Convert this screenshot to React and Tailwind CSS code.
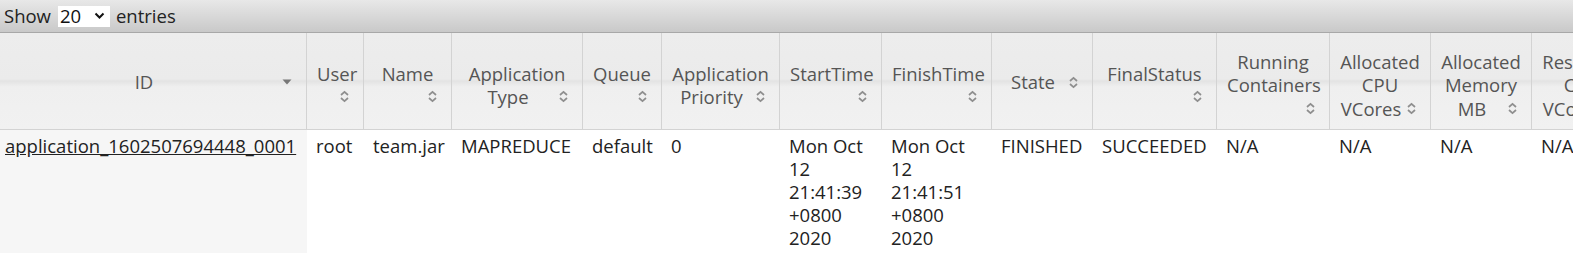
import React from "react";

const columns = [
  { key: "id", width: "w-[307px]", lines: ["ID"], icon: "desc", iconInline: true },
  { key: "user", width: "w-[57px]", lines: ["User"] },
  { key: "name", width: "w-[88px]", lines: ["Name"] },
  { key: "type", width: "w-[131px]", lines: ["Application", "Type"], iconInline: true },
  { key: "queue", width: "w-[79px]", lines: ["Queue"] },
  { key: "priority", width: "w-[118px]", lines: ["Application", "Priority"], iconInline: true },
  { key: "start", width: "w-[102px]", lines: ["StartTime"] },
  { key: "finish", width: "w-[110px]", lines: ["FinishTime"] },
  { key: "state", width: "w-[101px]", lines: ["State"], iconInline: true },
  { key: "final", width: "w-[124px]", lines: ["FinalStatus"] },
  { key: "running", width: "w-[113px]", lines: ["Running", "Containers"] },
  { key: "cpu", width: "w-[101px]", lines: ["Allocated", "CPU", "VCores"], iconInline: true },
  { key: "mem", width: "w-[101px]", lines: ["Allocated", "Memory", "MB"], iconInline: true },
  { key: "rcpu", width: "w-[101px]", lines: ["Reserved", "CPU", "VCores"], iconInline: true },
];

const row = {
  id: "application_1602507694448_0001",
  user: "root",
  name: "team.jar",
  type: "MAPREDUCE",
  queue: "default",
  priority: "0",
  start: "Mon Oct 12 21:41:39 +0800 2020",
  finish: "Mon Oct 12 21:41:51 +0800 2020",
  state: "FINISHED",
  final: "SUCCEEDED",
  running: "N/A",
  cpu: "N/A",
  mem: "N/A",
  rcpu: "N/A",
};

function SortIcon({ type }) {
  if (type === "desc") {
    return (
      <svg width="10" height="6" viewBox="0 0 10 6">
        <path d="M0.5 0.5 L9.5 0.5 L5 5.5 Z" fill="#777" />
      </svg>
    );
  }
  return (
    <svg width="9" height="13" viewBox="0 0 9 13">
      <path d="M1 5 L4.5 1.8 L8 5" fill="none" stroke="#8e8e8e" strokeWidth="1.7" />
      <path d="M1 8 L4.5 11.2 L8 8" fill="none" stroke="#8e8e8e" strokeWidth="1.7" />
    </svg>
  );
}

function HeaderCell({ col }) {
  const last = col.lines.length - 1;
  const single = col.lines.length === 1 && col.iconInline;
  return (
    <div
      className={`${col.width} shrink-0 h-[96px] border-r border-[#d3d3d3] flex flex-col justify-center ${
        single ? "pt-[2px]" : "pt-[8px]"
      } pl-[10px] pr-[10px] leading-[23.5px] text-[#555]`}
    >
      {col.lines.map((line, i) =>
        i === last && col.iconInline ? (
          <div key={i} className="flex items-center">
            <span className="flex-1 text-center whitespace-nowrap">{line}</span>
            <span className="w-[18px] flex justify-center">
              <SortIcon type={col.icon} />
            </span>
          </div>
        ) : (
          <div key={i} className="text-center whitespace-nowrap">
            {line}
          </div>
        )
      )}
      {!col.iconInline && (
        <div className="flex justify-end h-[23.5px] items-center">
          <span className="w-[18px] flex justify-center">
            <SortIcon type={col.icon} />
          </span>
        </div>
      )}
    </div>
  );
}

export default function App() {
  return (
    <div
      className="w-[1573px] h-[253px] overflow-hidden bg-white text-[18.5px]"
      style={{ fontFamily: '"Open Sans", "Noto Sans CJK SC", sans-serif' }}
    >
      <div className="h-[33px] border-b border-[#a8a8a8] bg-gradient-to-b from-[#e8e8e8] to-[#c9c9c9] flex items-center pl-[4px] text-[#222]">
        <span>Show</span>
        <div className="ml-[7px] mr-[6px] h-[21px] w-[52px] bg-white flex items-center pl-[2px] pr-[5px] justify-between">
          <span className="text-[#111] leading-none">20</span>
          <svg width="11" height="8" viewBox="0 0 11 8">
            <path d="M1.5 1.5 L5.5 5.5 L9.5 1.5" fill="none" stroke="#111" strokeWidth="2" />
          </svg>
        </div>
        <span>entries</span>
      </div>

      <div className="flex w-max border-b border-[#d3d3d3] bg-[linear-gradient(to_bottom,#ededed_0%,#ebebeb_48%,#e3e3e3_50%,#efefef_56%,#f1f1f1_100%)]">
        {columns.map((col) => (
          <HeaderCell key={col.key} col={col} />
        ))}
      </div>

      <div className="flex w-max text-[#222] leading-[23px]">
        {columns.map((col) => (
          <div
            key={col.key}
            className={`${col.width} shrink-0 pt-[4px] pb-[8px] ${
              col.key === "id" ? "bg-[#f6f6f6] pl-[5px]" : "pl-[9px] pr-[9px]"
            }`}
          >
            {col.key === "id" ? (
              <a href="#" className="underline text-[#222]">
                {row[col.key]}
              </a>
            ) : (
              row[col.key]
            )}
          </div>
        ))}
      </div>
    </div>
  );
}
